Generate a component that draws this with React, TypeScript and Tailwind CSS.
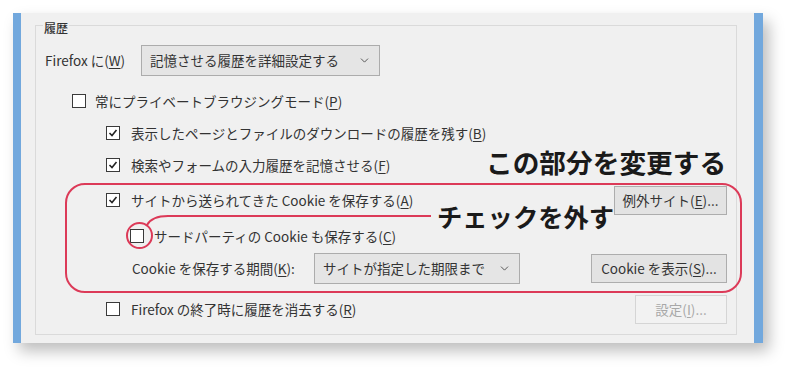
import { ChevronDown } from "lucide-react";

const FONT = { fontFamily: '"Noto Sans CJK JP", "Noto Sans", sans-serif' };

function Key({ k }: { k: string }) {
  return (
    <span>
      (<span className="underline underline-offset-2">{k}</span>)
    </span>
  );
}

function Checkbox({ checked }: { checked?: boolean }) {
  return (
    <div className="w-[14px] h-[14px] shrink-0 border border-[#3a3a3a] bg-white flex items-center justify-center">
      {checked && (
        <svg width="10" height="10" viewBox="0 0 10 10">
          <polyline points="1.5,5 4,7.5 8.5,2" fill="none" stroke="#222" strokeWidth="1.6" />
        </svg>
      )}
    </div>
  );
}

function Select({ text, width }: { text: string; width: string }) {
  return (
    <div className={`${width} h-[31px] border border-[#acacac] bg-[#e5e5e5] pl-[8px] pr-[8px] flex items-center justify-between`}>
      <span>{text}</span>
      <ChevronDown size={13} strokeWidth={1.8} className="text-[#555]" />
    </div>
  );
}

function Btn({ children, width, disabled }: { children: React.ReactNode; width: string; disabled?: boolean }) {
  return (
    <div
      className={`${width} h-[29px] ml-auto flex items-center justify-center border ${
        disabled ? "border-[#d5d5d5] bg-[#f2f2f2] text-[#a8a8a8]" : "border-[#adadad] bg-[#e3e3e3] text-[#333]"
      }`}
    >
      {children}
    </div>
  );
}

export default function App() {
  return (
    <div className="w-[800px] h-[378px] bg-white relative overflow-hidden text-[13.5px] text-[#333]" style={FONT}>
      {/* Window */}
      <div className="pt-[13px] pl-[13px]">
        <div className="w-[750px] h-[330px] flex shadow-[6px_8px_14px_rgba(0,0,0,0.26)]">
          <div className="w-[8px] bg-[#72a8dd]" />
          <div className="flex-1 bg-[#f0f0f0] pl-[14px] pr-[17px] pt-[12px] pb-[8px]">
            {/* Group box */}
            <div className="h-full border border-[#dadada] flex flex-col pr-[9px]">
              <div className="-mt-[5px] ml-[7px] self-start px-[1px] bg-[#f0f0f0] text-[12px] leading-[14px] font-medium">
                履歴
              </div>

              <div className="mt-[9px] h-[32px] pl-[9px] flex items-center">
                <span className="w-[96px]">
                  Firefox に<Key k="W" />
                </span>
                <Select text="記憶させる履歴を詳細設定する" width="w-[239px]" />
              </div>

              <div className="mt-[9px] h-[32px] pl-[36px] flex items-center">
                <Checkbox />
                <span className="ml-[9px]">
                  常にプライベートブラウジングモード<Key k="P" />
                </span>
              </div>

              <div className="h-[32px] pl-[70px] flex items-center">
                <Checkbox checked />
                <span className="ml-[11px]">
                  表示したページとファイルのダウンロードの履歴を残す<Key k="B" />
                </span>
              </div>

              <div className="h-[32px] pl-[70px] flex items-center">
                <Checkbox checked />
                <span className="ml-[11px]">
                  検索やフォームの入力履歴を記憶させる<Key k="F" />
                </span>
              </div>

              <div className="mt-[3px] h-[32px] pl-[70px] flex items-center">
                <Checkbox checked />
                <span className="ml-[11px]">
                  サイトから送られてきた Cookie を保存する<Key k="A" />
                </span>
                <Btn width="w-[113px]">
                  例外サイト<Key k="E" />...
                </Btn>
              </div>

              <div className="mt-[4px] h-[32px] pl-[94px] flex items-center">
                <Checkbox />
                <span className="ml-[10px]">
                  サードパーティの Cookie も保存する<Key k="C" />
                </span>
              </div>

              <div className="h-[32px] pl-[96px] flex items-center">
                <span className="w-[182px]">
                  Cookie を保存する期間<Key k="K" />:
                </span>
                <Select text="サイトが指定した期限まで" width="w-[206px]" />
                <Btn width="w-[136px]">
                  Cookie を表示<Key k="S" />...
                </Btn>
              </div>

              <div className="mt-[9px] h-[32px] pl-[70px] flex items-center">
                <Checkbox />
                <span className="ml-[11px]">
                  Firefox の終了時に履歴を消去する<Key k="R" />
                </span>
                <Btn width="w-[92px]" disabled>
                  設定<Key k="I" />...
                </Btn>
              </div>
            </div>
          </div>
          <div className="w-[9px] bg-[#72a8dd]" />
        </div>
      </div>

      {/* Annotations */}
      <div className="absolute left-[65px] top-[183px] w-[677px] h-[110px] border-2 border-[#dc3a58] rounded-[20px] pointer-events-none" />
      <svg className="absolute left-0 top-0 pointer-events-none" width="800" height="378">
        <circle cx="139.5" cy="235.5" r="12.5" fill="none" stroke="#dc3a58" strokeWidth="2" />
        <path d="M147 225 Q152 216 168 216 L431 216" fill="none" stroke="#dc3a58" strokeWidth="2" />
      </svg>
      <div className="absolute left-[486px] top-[147px] text-[26.7px] leading-[30px] font-bold text-[#1a1a1a]">
        この部分を変更する
      </div>
      <div className="absolute left-[437px] top-[201px] text-[25.3px] leading-[30px] font-bold text-[#1a1a1a]">
        チェックを外す
      </div>
    </div>
  );
}
